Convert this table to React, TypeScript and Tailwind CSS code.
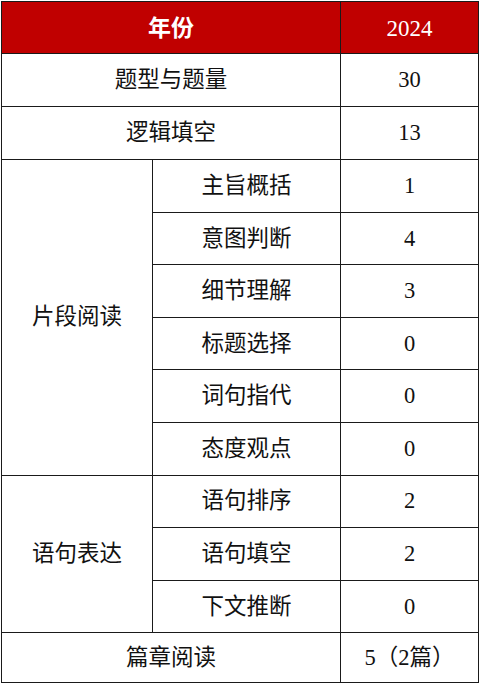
import React from "react";

const cell = "border border-[#1a1a1a] text-center align-middle";

export default function App() {
  const reading = [
    ["主旨概括", "1"],
    ["意图判断", "4"],
    ["细节理解", "3"],
    ["标题选择", "0"],
    ["词句指代", "0"],
    ["态度观点", "0"],
  ];
  const expression = [
    ["语句排序", "2"],
    ["语句填空", "2"],
    ["下文推断", "0"],
  ];

  return (
    <div
      className="w-[480px] h-[686px] bg-white pl-px pt-px"
      style={{ fontFamily: '"Liberation Serif", "Noto Sans CJK SC", serif' }}
    >
      <table className="table-fixed border-collapse w-[477px] text-[22.5px] text-[#111] border-t border-t-[#888] border-l border-l-[#222] border-r border-r-[#bbb] border-b border-b-[#222]">
        <colgroup>
          <col className="w-[151px]" />
          <col className="w-[188px]" />
          <col className="w-[138px]" />
        </colgroup>
        <tbody>
          {/* Header */}
          <tr className="h-[52px] bg-[#c00000] text-white">
            <td colSpan={2} className={`${cell} font-bold text-[23px] pt-[3px]`}>
              年份
            </td>
            <td className={`${cell} text-[23px] pt-[3px]`}>2024</td>
          </tr>

          <tr className="h-[53px]">
            <td colSpan={2} className={cell}>题型与题量</td>
            <td className={cell}>30</td>
          </tr>
          <tr className="h-[53px]">
            <td colSpan={2} className={cell}>逻辑填空</td>
            <td className={cell}>13</td>
          </tr>

          {reading.map(([name, n], i) => (
            <tr key={name} className="h-[52.6px]">
              {i === 0 && (
                <td rowSpan={reading.length} className={cell}>
                  片段阅读
                </td>
              )}
              <td className={cell}>{name}</td>
              <td className={cell}>{n}</td>
            </tr>
          ))}

          {expression.map(([name, n], i) => (
            <tr key={name} className="h-[52.6px]">
              {i === 0 && (
                <td rowSpan={expression.length} className={cell}>
                  语句表达
                </td>
              )}
              <td className={cell}>{name}</td>
              <td className={cell}>{n}</td>
            </tr>
          ))}

          <tr className="h-[50px]">
            <td colSpan={2} className={cell}>篇章阅读</td>
            <td className={cell}>5（2篇）</td>
          </tr>
        </tbody>
      </table>
    </div>
  );
}
